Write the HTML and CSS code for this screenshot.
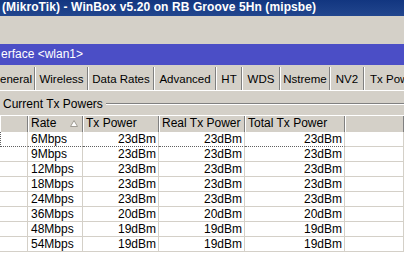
FILE: index.html
```html
<!DOCTYPE html>
<html lang="en">
<head>
  <meta charset="UTF-8">
  <title>WinBox - Interface wlan1</title>
  <link rel="stylesheet" href="styles.css">
</head>
<body>
  <div class="titlebar">(MikroTik) - WinBox v5.20 on RB Groove 5Hn (mipsbe)</div>
  <div class="toolbar"></div>

  <div class="window">
    <div class="wincaption">erface &lt;wlan1&gt;</div>

    <div class="tabs">
      <div class="tab w-general">eneral</div>
      <div class="tab w-wireless">Wireless</div>
      <div class="tab w-rates">Data Rates</div>
      <div class="tab w-advanced">Advanced</div>
      <div class="tab w-ht">HT</div>
      <div class="tab w-wds">WDS</div>
      <div class="tab w-nstreme">Nstreme</div>
      <div class="tab w-nv2">NV2</div>
      <div class="tab w-txpower">Tx Power</div>
    </div>

    <div class="group">
      <span class="group-label">Current Tx Powers</span>
      <span class="group-line"></span>
    </div>

    <div class="grid">
      <div class="row head">
        <div class="cell"></div>
        <div class="cell">Rate
          <svg class="sort" width="8" height="7" viewBox="0 0 8 7">
            <path d="M4 0.5 L7.5 6.5 L0.5 6.5 Z" fill="#fff" stroke="#a09c94" stroke-width="1"/>
          </svg>
        </div>
        <div class="cell">Tx Power</div>
        <div class="cell">Real Tx Power</div>
        <div class="cell">Total Tx Power</div>
        <div class="cell"></div>
      </div>
      <div id="rows"></div>
    </div>
  </div>

  <script>
    const powers = [
      ["6Mbps", "23dBm", "23dBm", "23dBm"],
      ["9Mbps", "23dBm", "23dBm", "23dBm"],
      ["12Mbps", "23dBm", "23dBm", "23dBm"],
      ["18Mbps", "23dBm", "23dBm", "23dBm"],
      ["24Mbps", "23dBm", "23dBm", "23dBm"],
      ["36Mbps", "20dBm", "20dBm", "20dBm"],
      ["48Mbps", "19dBm", "19dBm", "19dBm"],
      ["54Mbps", "19dBm", "19dBm", "19dBm"]
    ];

    const rows = document.getElementById("rows");
    powers.forEach((p, i) => {
      const row = document.createElement("div");
      row.className = i === 0 ? "row focus" : "row";
      row.innerHTML = `
        <div class="cell"></div>
        <div class="cell">${p[0]}</div>
        <div class="cell num">${p[1]}</div>
        <div class="cell num">${p[2]}</div>
        <div class="cell num">${p[3]}</div>
        <div class="cell"></div>
      `;
      rows.appendChild(row);
    });
  </script>
</body>
</html>
```

FILE: styles.css
```css
body {
  margin: 0;
  width: 404px;
  height: 275px;
  overflow: hidden;
  background: #fff;
  font-family: "Liberation Sans", Arial, sans-serif;
  font-size: 12px;
  color: #000;
}

.titlebar {
  height: 16px;
  line-height: 15px;
  padding-left: 2px;
  background: linear-gradient(to bottom, #123680, #22468e);
  color: #fff;
  font-weight: bold;
  font-size: 12px;
  letter-spacing: 0.1px;
  white-space: nowrap;
}

.toolbar {
  height: 28px;
  background: #d4d0c8;
}

.window {
  background: #d4d0c8;
}

.wincaption {
  height: 21px;
  line-height: 21px;
  padding-left: 1px;
  background: #4b4ec6;
  color: #fff;
  white-space: nowrap;
}

.tabs {
  display: flex;
  height: 23px;
  margin-top: 2px;
  border-bottom: 1px solid #fff;
  white-space: nowrap;
  overflow: hidden;
  font-size: 11.5px;
}

.tab {
  flex: none;
  line-height: 25px;
  text-align: center;
  border-right: 1px solid #808080;
  box-shadow: 1px 0 0 #fff;
  margin-right: 1px;
}

.w-general { width: 34px; text-align: left; }
.w-wireless { width: 51px; }
.w-rates { width: 64px; }
.w-advanced { width: 60px; }
.w-ht { width: 24px; }
.w-wds { width: 36px; }
.w-nstreme { width: 48px; }
.w-nv2 { width: 32px; }
.w-txpower { width: 60px; text-align: left; padding-left: 5px; }

.group {
  display: flex;
  align-items: center;
  height: 24px;
  padding-top: 2px;
  padding-left: 3px;
  box-sizing: border-box;
}

.group-line {
  flex: 1;
  margin-left: 3px;
  border-top: 1px solid #808080;
  border-bottom: 1px solid #fff;
}

.grid {
  background: #fff;
  height: 160px;
  border-top: 1px solid #fff;
}

.row {
  display: grid;
  grid-template-columns: 28px 55px 76px 86px 100px 1fr;
  height: 15px;
  line-height: 15px;
}

.row .cell {
  border-right: 1px solid #d4d0c8;
  border-bottom: 1px solid #d4d0c8;
  padding: 0 3px;
  white-space: nowrap;
  overflow: hidden;
}

.row .cell.num {
  text-align: right;
  padding-right: 2px;
}

.row.head {
  height: 16px;
  background: #d4d0c8;
}

.row.head .cell {
  line-height: 15px;
  border-right: 1px solid #808080;
  border-bottom: none;
  box-shadow: inset 1px 0 0 #fff;
  position: relative;
}

.sort {
  position: absolute;
  right: 4px;
  top: 4px;
}

.row.focus .cell {
  border-bottom: 1px dotted #606060;
}

.row.focus .cell:first-child {
  border-left: 1px dotted #606060;
}

.row.focus .cell:last-child {
  border-bottom: 1px solid #d4d0c8;
}
```
